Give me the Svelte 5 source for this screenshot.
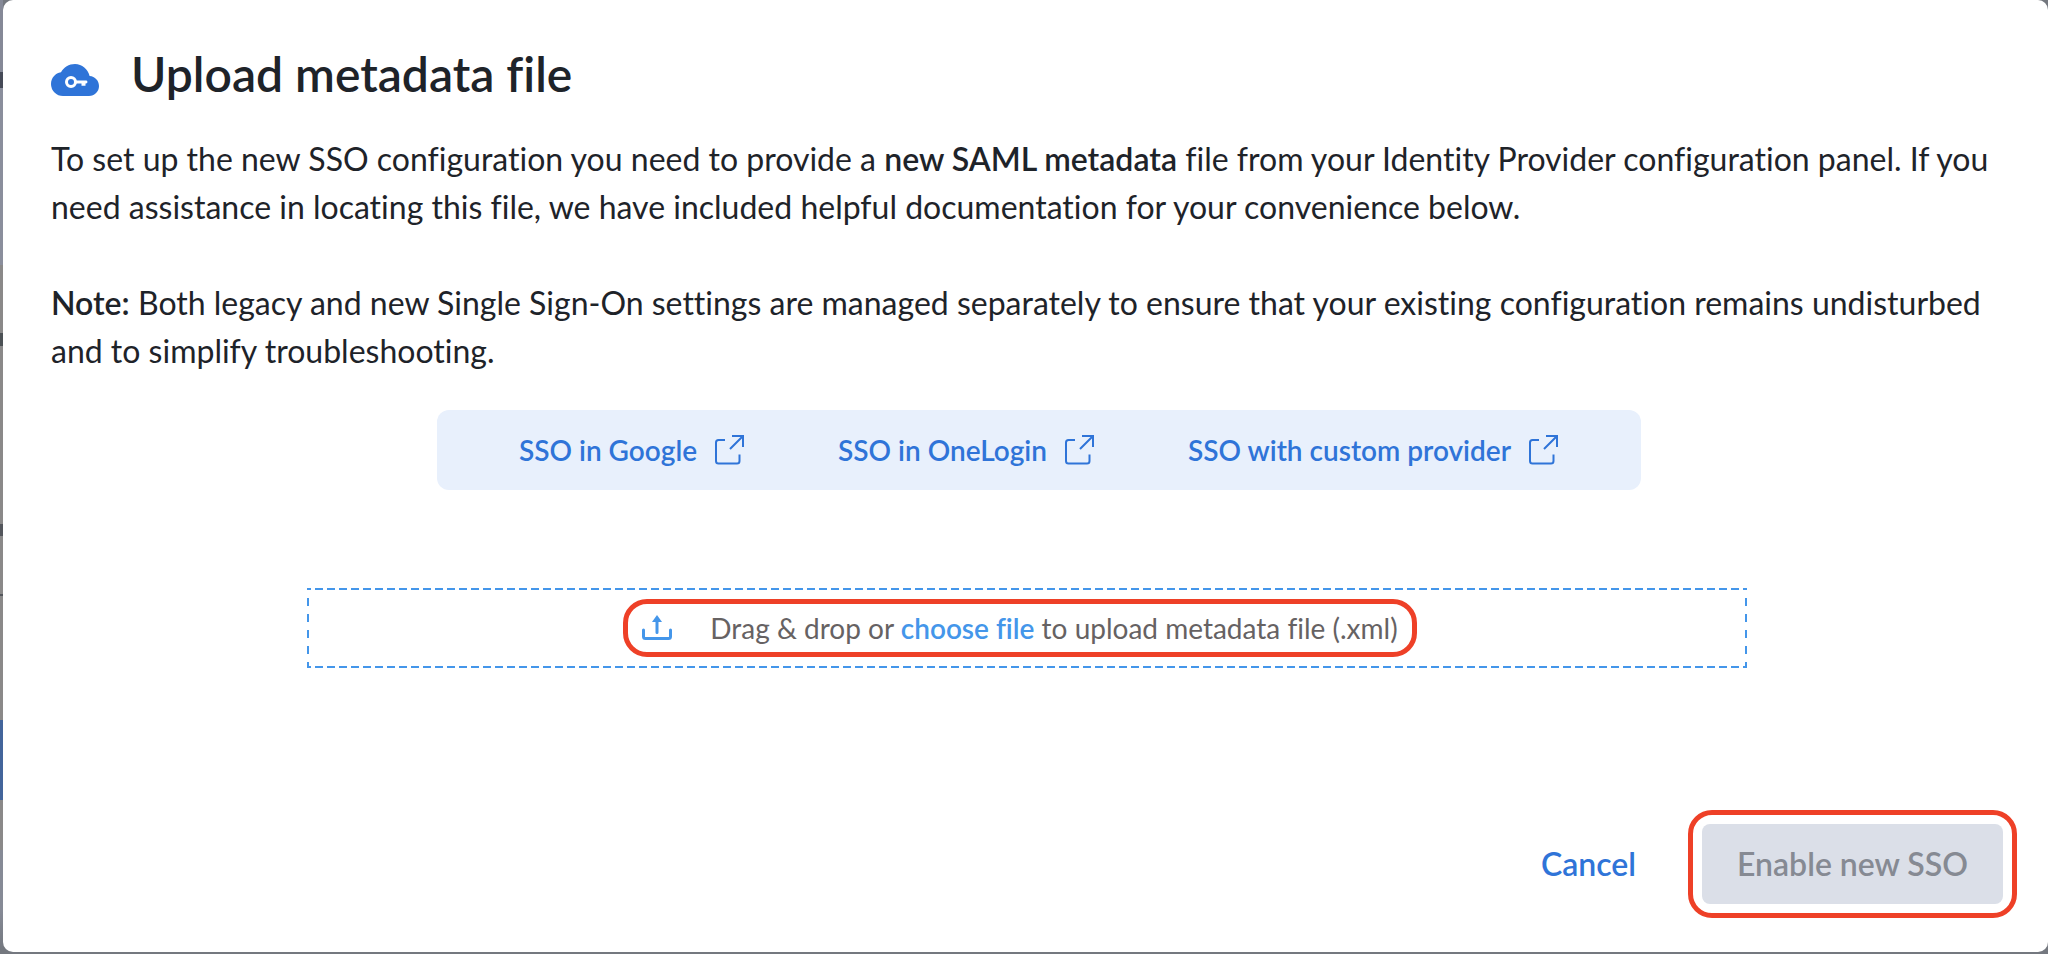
<script>
  const guides = [
    { label: 'SSO in Google', href: '#google' },
    { label: 'SSO in OneLogin', href: '#onelogin' },
    { label: 'SSO with custom provider', href: '#custom' },
  ];
</script>

<div class="backdrop">
  <div class="dialog" role="dialog" aria-labelledby="dialog-title">
    <header>
      <svg class="cloud" viewBox="0 0 48 32" aria-hidden="true">
        <path fill="#2f74d8" d="M12 32A12 12 0 0 1 0 20C0 14 4.300 9.200 10 8.300C12.600 3.300 17.900 0 24 0C31 0 37 5 38.600 12C44 12.400 48 16.700 48 22C48 27.600 43.600 32 38 32Z" />
        <circle cx="20" cy="18" r="4.500" fill="none" stroke="#fff" stroke-width="3" />
        <path fill="#fff" d="M24.500 16.600H35A1.300 1.300 0 0 1 35 19.500H34.500V21.800H30.500V19.500H24.500Z" />
      </svg>
      <h1 id="dialog-title">Upload metadata file</h1>
    </header>

    <p>
      To set up the new SSO configuration you need to provide a <strong>new SAML metadata</strong>
      file from your Identity Provider configuration panel. If you need assistance in locating this
      file, we have included helpful documentation for your convenience below.
    </p>
    <p>
      <strong>Note:</strong> Both legacy and new Single Sign-On settings are managed separately to
      ensure that your existing configuration remains undisturbed and to simplify troubleshooting.
    </p>

    <nav>
      {#each guides as guide}
        <a href={guide.href}>
          {guide.label}
          <svg class="external" viewBox="0 0 30 30" aria-hidden="true">
            <path d="M10 5H3.500Q1 5 1 7.500V26Q1 28.500 3.500 28.500H22Q24.500 28.500 24.500 26V19.500" />
            <path d="M15 14L27.500 1.500M17 1H28V12" />
          </svg>
        </a>
      {/each}
    </nav>

    <div class="dropzone">
      <label class="picker">
        <svg class="upload" viewBox="0 0 30 26" aria-hidden="true">
          <path class="line" d="M1.500 15V21.500Q1.500 23.500 3.500 23.500H26.500Q28.500 23.500 28.500 21.500V15M15 6V17.500" />
          <path class="tip" d="M15 0L20 7H10Z" />
        </svg>
        <span>Drag &amp; drop or <b>choose file</b> to upload metadata file (.xml)</span>
        <input type="file" accept=".xml" />
      </label>
    </div>

    <footer>
      <button class="cancel" type="button">Cancel</button>
      <div class="marked">
        <button class="enable" type="button" disabled>Enable new SSO</button>
      </div>
    </footer>
  </div>
</div>

<style>
  :global(body) {
    background: #74787f;
  }

  .backdrop {
    box-sizing: border-box;
    min-height: 100vh;
    padding: 0 0 2px 3px;
    display: flex;
    background:
      linear-gradient(
        #858997 0 72px, #454a57 72px 88px, #8a8e9c 88px 265px,
        #8a8989 265px 333px, #4c5155 333px 346px, #8a8989 346px 524px,
        #53565c 524px 536px, #8a8989 536px 594px, #53565c 594px 596px,
        #8a8989 596px 720px, #43659b 720px 800px, #8a8989 800px 850px,
        #868a96 850px 910px, #74787f 950px
      ) left / 3px 100% no-repeat,
      #74787f;
    font-family: Lato, 'Open Sans', sans-serif;
    font-variant-ligatures: none;
    color: #1e2329;
  }

  .dialog {
    box-sizing: border-box;
    flex: 1;
    display: flex;
    flex-direction: column;
    padding: 44px 45px 48px 48px;
    border-radius: 10px;
    background: #fff;
  }

  header {
    display: flex;
    align-items: center;
    gap: 32px;
    margin-bottom: 31px;
  }

  .cloud {
    width: 48px;
    height: 32px;
    margin-top: 12px;
  }

  h1 {
    margin: 0;
    font-size: 48px;
    line-height: 60px;
    font-weight: 600;
  }

  p {
    margin: 0 0 48px;
    font-size: 32px;
    line-height: 48px;
  }

  p:last-of-type {
    margin-bottom: 35px;
  }

  strong,
  b {
    font-weight: 600;
  }

  nav {
    box-sizing: border-box;
    align-self: center;
    width: 100%;
    max-width: 1204px;
    min-height: 80px;
    margin-left: 24px;
    display: flex;
    align-items: center;
    justify-content: center;
    gap: 93px;
    border-radius: 12px;
    background: #e8f0fc;
  }

  a {
    display: flex;
    align-items: center;
    gap: 18px;
    font-size: 28px;
    line-height: 40px;
    font-weight: 600;
    color: #2f74d8;
    text-decoration: none;
    white-space: nowrap;
  }

  .external {
    width: 30px;
    height: 30px;
    fill: none;
    stroke: #2f74d8;
    stroke-width: 2;
  }

  .dropzone {
    --dash-x: repeating-linear-gradient(90deg, #4496ea 0 4px, transparent 4px 8px, #4496ea 8px 12px);
    --dash-y: repeating-linear-gradient(#4496ea 0 2px, transparent 2px 10px, #4496ea 10px 16px);
    align-self: center;
    width: 100%;
    max-width: 1440px;
    min-height: 80px;
    margin-top: 98px;
    display: flex;
    align-items: center;
    justify-content: center;
    background:
      var(--dash-x) top / 100% 2px no-repeat,
      var(--dash-x) bottom / 100% 2px no-repeat,
      var(--dash-y) left / 2px 100% no-repeat,
      var(--dash-y) right / 2px 100% no-repeat;
  }

  .picker {
    position: relative;
    display: flex;
    align-items: center;
    gap: 38px;
    margin-right: 14px;
    padding: 4px 14px;
    border: 5px solid #ee4027;
    border-radius: 24px;
    font-size: 28px;
    line-height: 40px;
    color: #666263;
    cursor: pointer;
  }

  .picker b {
    color: #4496ea;
  }

  .picker input {
    position: absolute;
    inset: 0;
    opacity: 0;
  }

  .upload {
    width: 30px;
    height: 26px;
  }

  .line {
    fill: none;
    stroke: #4496ea;
    stroke-width: 3;
    stroke-linecap: round;
  }

  .tip {
    fill: #4496ea;
  }

  footer {
    margin-top: auto;
    display: flex;
    align-items: center;
    justify-content: flex-end;
    gap: 34px;
  }

  button {
    border: 0;
    font: 600 32px/48px Lato, 'Open Sans', sans-serif;
  }

  .cancel {
    padding: 16px 32px;
    background: none;
    color: #2f74d8;
  }

  .marked {
    position: relative;
  }

  .marked::after {
    content: '';
    position: absolute;
    inset: -14px;
    border: 5px solid #ee4027;
    border-radius: 24px;
    pointer-events: none;
  }

  .enable {
    padding: 16px 35px;
    border-radius: 8px;
    background: #dbdfe8;
    color: #868a93;
  }
</style>
